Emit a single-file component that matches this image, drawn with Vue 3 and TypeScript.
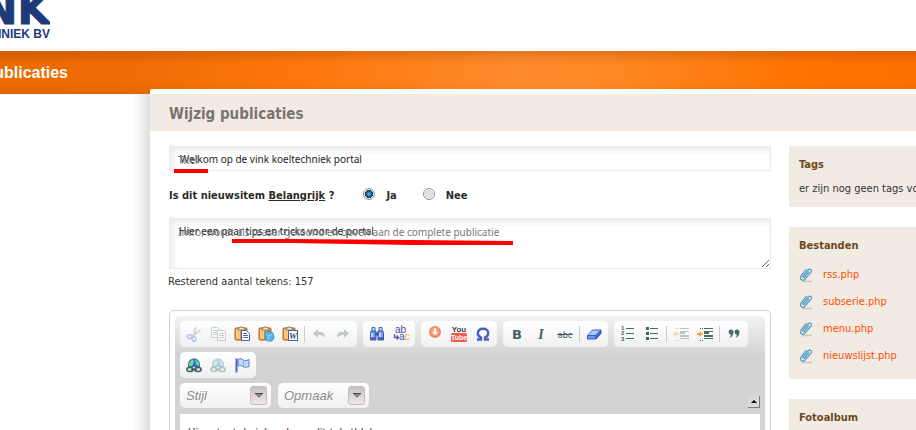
<script setup lang="ts">
import { ref } from 'vue'

interface Tool {
  label: string
  icon: string
  faded?: boolean
}
type Cell = Tool | null

const title = ref('Welkom op de vink koeltechniek portal')
const intro = ref('Hier een paar tips en tricks voor de portal')
const important = ref('ja')
const files = ['rss.php', 'subserie.php', 'menu.php', 'nieuwslijst.php']
const combos = ['Stijl', 'Opmaak']

const clipboard =
  '<rect x="1" y="2" width="12" height="12" rx="1" fill="#e9963a" stroke="#b5651d"/><rect x="2" y="3" width="4" height="10" fill="#fbc77c"/><path d="M4 4V2h2V1h3v1h2v2z" fill="#f4e6c8" stroke="#7d6a4a" stroke-width=".8"/>'
const chain =
  '<path d="M2 8C2 4 4.500 1.500 8 1.500S14 4 14 8v2H2z" fill="#2f6fd8"/><path d="M3 8c0-3 2-5 4-5.500L8 5 6 9H3zM9 3l3 1 1.500 4-1.500 1-2-2z" fill="#6be06b"/><rect x="1" y="10.500" width="6" height="4" rx="2" fill="#d9e4e2" stroke="#3f5f5f" stroke-width="1.600"/><rect x="9" y="10.500" width="6" height="4" rx="2" fill="#d9e4e2" stroke="#3f5f5f" stroke-width="1.600"/><path d="M5 12.500h6" stroke="#3f5f5f" stroke-width="1.600"/>'
const outline =
  '<path d="M3 2.500h3M3 14.500h3" stroke="#4a6a68" stroke-dasharray="1 1"/><path d="M7 2.500h9M7 12.500h9M7 5.500h9" stroke="#4a6a68"/><path d="M7 6h5v2H7zM7 9h9v2H7z" fill="#4a6a68"/>'

const icons: Record<string, string> = {
  cut: '<path d="M9.500 1L8 10M14.500 4L6 10.500" stroke="#8f9aa0" stroke-width="2"/><ellipse cx="3.500" cy="10.500" rx="2.500" ry="1.800" fill="none" stroke="#5578d8" stroke-width="1.800"/><ellipse cx="8" cy="13" rx="1.800" ry="2.200" fill="none" stroke="#5578d8" stroke-width="1.800"/>',
  copy: '<path d="M1.500 1.500h6l2 2v8h-8z" fill="#fff" stroke="#6f8584"/><path d="M3 4.500h4M3 6.500h5M3 8.500h5" stroke="#6f8584"/><path d="M7.500 4.500h6l2 2v8h-8z" fill="#fff" stroke="#6f8584"/><path d="M9 7.500h4M9 9.500h5M9 11.500h5" stroke="#6f8584"/>',
  paste: clipboard + '<path d="M7.500 4.500h5l3 3v7h-8z" fill="#fff" stroke="#4861b8"/><path d="M9 7.500h4M9 9.500h5M9 11.500h5" stroke="#5467c0"/>',
  pasteText: clipboard + '<path d="M7 7l4-2 4 2 1 5-2 3H9l-2-3z" fill="#4fb7e6" stroke="#2d84bb" stroke-width=".8"/><path d="M8 8l3 2 4-2M11 10l-1 5" stroke="#9be0f8" stroke-width=".8" fill="none"/>',
  pasteWord: clipboard + '<rect x="6.500" y="4.500" width="9" height="10" fill="#fff" stroke="#4861b8"/><text x="11" y="13" text-anchor="middle" font-family="Liberation Serif, serif" font-weight="bold" font-style="italic" font-size="9" fill="#36505a">W</text>',
  undo: '<path d="M2 7.500L7 3v3h3c3 0 4 2 3.500 6C12 9.500 10 9 7 9v3z" fill="#5d7674"/>',
  redo: '<path d="M14 7.500L9 3v3H6c-3 0-4 2-3.500 6C4 9.500 6 9 9 9v3z" fill="#5d7674"/>',
  find: '<path d="M3 1.500h3v4H3zM10 1.500h3v4h-3z" fill="#bfe1fb" stroke="#4560bd"/><path d="M2 5h5v9H1.500V8zM9 5h5l.500 3v6H9z" fill="#6f9fe8" stroke="#4454b0"/><path d="M3 7v4M11 7v4" stroke="#d7f0ff" stroke-width="1.500"/><path d="M6 6.500h4v3H6z" fill="#4454b0"/><path d="M2 12.500h5M9 12.500h5" stroke="#4454b0" stroke-width="2"/>',
  replace: '<text x="2" y="7" font-family="Liberation Sans, sans-serif" font-size="10" fill="#3f4bb0">ab</text><text x="6" y="14" font-family="Liberation Sans, sans-serif" font-size="10" fill="#3f4bb0">a<tspan fill="#f59a1c">c</tspan></text><path d="M1.500 8v3.500H5M3.500 9.500l2 2-2 2" fill="none" stroke="#5560b8" stroke-width="1.400"/>',
  download: '<circle cx="8" cy="6" r="6" fill="#f7855e"/><circle cx="8" cy="5.500" r="4.300" fill="#fb9f7c"/><path d="M7 2.500h2V6h2L8 9 5 6h2z" fill="#fff"/>',
  youtube: '<text x="8" y="6" text-anchor="middle" font-family="Liberation Sans, sans-serif" font-size="8" font-weight="bold" fill="#444">You</text><rect x="0" y="7" width="16" height="9" rx="1.500" fill="#f5594e"/><text x="8" y="14" text-anchor="middle" font-family="Liberation Sans, sans-serif" font-size="7" font-weight="bold" fill="#fff">Tube</text>',
  omega: '<path d="M2 13.500h4v-2C3.800 10.500 2.800 9 2.800 7.200 2.800 4.500 5 2.800 8 2.800s5.200 1.700 5.200 4.400c0 1.800-1 3.300-3.200 4.300v2h4" fill="none" stroke="#4560c4" stroke-width="2.400"/>',
  bold: '<text x="8" y="13" text-anchor="middle" font-family="DejaVu Sans, sans-serif" font-size="13" font-weight="bold" fill="#42625f">B</text>',
  italic: '<text x="8" y="13" text-anchor="middle" font-family="Liberation Serif, serif" font-size="14" font-weight="bold" font-style="italic" fill="#42625f">I</text>',
  strike: '<text x="8" y="12" text-anchor="middle" font-family="DejaVu Sans Condensed, sans-serif" font-size="9" fill="#42625f">abc</text><path d="M0 8.500h16" stroke="#42625f"/>',
  eraser: '<path d="M1.500 9.500L6.500 4h8.500L10 9.500z" fill="#a9c9fa" stroke="#4565cf"/><path d="M1.500 9.500H10v3.500H1.500z" fill="#6e97f2" stroke="#3d59c2"/><path d="M10 9.500L15 4v3.500L10 13z" fill="#3f64d6" stroke="#3d59c2"/>',
  numbers: '<g font-family="Liberation Sans, sans-serif" font-size="6" font-weight="bold" fill="#42625f"><text x="1" y="4">1</text><text x="1" y="9">2</text><text x="1" y="15">3</text></g><path d="M6 2.500h8M6 7.500h8M6 12.500h8" stroke="#4a6a68"/>',
  bullets: '<path d="M2 1h3v3H2zM2 6h3v3H2zM2 11h3v3H2z" fill="#42625f"/><path d="M6 2.500h8M6 7.500h8M6 12.500h8" stroke="#4a6a68"/>',
  outdent: outline + '<path d="M0 8l3.500-3v2H6v2H3.500v2z" fill="#f7a03c"/>',
  indent: outline + '<path d="M6 8L2.500 5v2H0v2h2.500v2z" fill="#f7a03c"/>',
  quote: '<path d="M2.500 6a2.500 2.500 0 1 1 5 0c0 3-1.500 5-4 6 .800-1 1.200-2 1.200-3.500A2.500 2.500 0 0 1 2.500 6zM8.500 6a2.500 2.500 0 1 1 5 0c0 3-1.500 5-4 6 .800-1 1.200-2 1.200-3.500A2.500 2.500 0 0 1 8.500 6z" fill="#4f6a6c"/>',
  link: chain,
  unlink: chain,
  anchor: '<path d="M2.500 1.500v14" stroke="#4c5fbc" stroke-width="2"/><path d="M4 2.500c2-1.500 4-1 5 .500 2 1 3 1 6-.500v7c-3 1-4.500 1-6 0-1.500-1.500-3-1.500-5-.500z" fill="#c3dafa" stroke="#5079d2"/><path d="M9.500 4v5" stroke="#8aa9e6"/>'
}

const rows: Cell[][][] = [
  [
    [
      { label: 'Knippen', icon: 'cut', faded: true },
      { label: 'Kopiëren', icon: 'copy', faded: true },
      { label: 'Plakken', icon: 'paste' },
      { label: 'Plakken als platte tekst', icon: 'pasteText' },
      { label: 'Plakken uit Word', icon: 'pasteWord' },
      null,
      { label: 'Ongedaan maken', icon: 'undo', faded: true },
      { label: 'Opnieuw uitvoeren', icon: 'redo', faded: true }
    ],
    [
      { label: 'Zoeken', icon: 'find' },
      { label: 'Vervangen', icon: 'replace' }
    ],
    [
      { label: 'Bestand invoegen', icon: 'download' },
      { label: 'YouTube', icon: 'youtube' },
      { label: 'Speciaal teken', icon: 'omega' }
    ],
    [
      { label: 'Vet', icon: 'bold' },
      { label: 'Cursief', icon: 'italic' },
      { label: 'Doorhalen', icon: 'strike' },
      null,
      { label: 'Opmaak verwijderen', icon: 'eraser' }
    ],
    [
      { label: 'Genummerde lijst', icon: 'numbers' },
      { label: 'Opsomming', icon: 'bullets' },
      null,
      { label: 'Inspringing verkleinen', icon: 'outdent', faded: true },
      { label: 'Inspringing vergroten', icon: 'indent' },
      null,
      { label: 'Citaatblok', icon: 'quote' }
    ]
  ],
  [
    [
      { label: 'Link', icon: 'link' },
      { label: 'Link verwijderen', icon: 'unlink', faded: true },
      { label: 'Interne link', icon: 'anchor' }
    ]
  ]
]
</script>

<template>
  <div class="page">
    <header class="top">
      <svg class="logo" width="220" height="51" viewBox="0 0 220 51" role="img" aria-label="Vink Koeltechniek BV">
        <text class="logo-name" x="220" y="24" text-anchor="end">VINK</text>
        <text class="logo-sub" x="220" y="38" text-anchor="end">KOELTECHNIEK BV</text>
      </svg>
    </header>
    <nav class="banner">
      <a class="crumb" href="#">Publicaties</a>
    </nav>

    <div class="shell">
      <div class="edge"></div>
      <main class="panel">
        <h1 class="heading">Wijzig publicaties</h1>
        <div class="columns">
          <form class="form" @submit.prevent>
            <div class="field">
              <input id="title" v-model="title" class="box title-box" type="text" />
              <label class="hint" for="title">Titel</label>
              <svg class="mark mark-title" width="34" height="4"><rect width="34" height="4" fill="#f00" /></svg>
            </div>

            <div class="question">
              <span class="ask">Is dit nieuwsitem <u>Belangrijk</u> ?</span>
              <label class="choice"><input v-model="important" type="radio" name="important" value="ja" />Ja</label>
              <label class="choice"><input v-model="important" type="radio" name="important" value="nee" />Nee</label>
            </div>

            <div class="field">
              <textarea id="intro" v-model="intro" class="box intro-box"></textarea>
              <label class="hint intro-hint" for="intro">Intro, wordt als teaser getoond en boven aan de complete publicatie</label>
              <svg class="mark mark-intro" width="282" height="7" viewBox="0 0 282 7">
                <path d="M0 1h60l120 1 101 1v4H180L60 5H0z" fill="#f00" />
              </svg>
            </div>
            <p class="remaining">Resterend aantal tekens: 157</p>

            <section class="editor">
              <div class="editor-inner">
                <div v-for="(row, r) in rows" :key="r" class="tools">
                  <div v-for="(group, g) in row" :key="g" class="group">
                    <template v-for="(cell, c) in group" :key="c">
                      <button v-if="cell" type="button" class="tool" :class="{ faded: cell.faded }" :aria-label="cell.label">
                        <svg width="16" height="16" viewBox="0 0 16 16" v-html="icons[cell.icon]"></svg>
                      </button>
                      <span v-else class="rule"></span>
                    </template>
                  </div>
                </div>
                <div class="tools combos">
                  <div v-for="name in combos" :key="name" class="combo">
                    <select :aria-label="name"><option>{{ name }}</option></select>
                    <span class="drop"><svg width="8" height="5" viewBox="0 0 8 5"><path d="M0 0h8v1L4 5 0 1z" fill="#8a8484" /><path d="M0 0h8v1H0z" fill="#444" /></svg></span>
                  </div>
                  <button type="button" class="collapse" aria-label="Werkbalk inklappen">
                    <svg width="6" height="3" viewBox="0 0 6 3"><path d="M3 0l3 3H0z" fill="#000" /></svg>
                  </button>
                </div>
                <div class="content"><p>Hier staat de inhoud van dit tekstblok</p></div>
              </div>
            </section>
          </form>

          <aside class="side">
            <section class="card">
              <h2>Tags</h2>
              <p class="note">er zijn nog geen tags voor dit item</p>
            </section>
            <section class="card">
              <h2>Bestanden</h2>
              <ul class="files">
                <li v-for="file in files" :key="file">
                  <svg width="14" height="16" viewBox="0 0 14 16">
                    <path d="M3 14.500h10" stroke="#cbc5c0" stroke-width="1.500" />
                    <path d="M10 4.500L5.500 10c-1 1-2.300 0-1.400-1.200L9 3c2-2 4.500 0 3 2.200l-6 7c-2.500 2.300-5.800 0-4-3L7.500 2" fill="none" stroke="#4f9cc8" stroke-width="1.200" />
                  </svg>
                  <a href="#">{{ file }}</a>
                </li>
              </ul>
            </section>
            <section class="card">
              <h2>Fotoalbum</h2>
              <p class="note">er zijn nog geen foto's</p>
            </section>
          </aside>
        </div>
      </main>
    </div>
  </div>
</template>

<style>
body {
  background: #fff;
}
</style>

<style scoped>
.page {
  height: 100vh;
  overflow: hidden;
  font-family: "DejaVu Sans Condensed", "Noto Sans", sans-serif;
  font-size: 11px;
  line-height: 16px;
  color: #333;
}
.page * {
  box-sizing: border-box;
}
.top,
.banner {
  display: flex;
  justify-content: flex-end;
}
.top {
  width: 50px;
  height: 51px;
}
.logo {
  flex: none;
}
.logo text {
  font-weight: bold;
  fill: #1d3a78;
  stroke: #1d3a78;
}
.logo-name {
  font-family: "DejaVu Sans", sans-serif;
  font-size: 42px;
  stroke-width: 1px;
}
.logo-sub {
  font-family: "Liberation Sans", sans-serif;
  font-size: 12px;
  stroke-width: 0;
}
.banner {
  height: 43px;
  align-items: center;
  padding-right: calc(100% - 68px);
  background:
    linear-gradient(rgba(110, 50, 0, 0.22), rgba(110, 50, 0, 0) 13px, rgba(110, 50, 0, 0) 30px, rgba(110, 50, 0, 0.08)),
    linear-gradient(90deg, #ec6a02 0, #ee6c02 14%, #ff770c 33%, #ff8a2b 56%, #ff8926 65%, #ff7300 88%, #fb7000);
}
.crumb {
  flex: none;
  font: bold 16px/20px "Liberation Sans", sans-serif;
  color: #fff;
  text-decoration: none;
}
.shell {
  display: grid;
  grid-template-columns: 17px minmax(0, 1fr);
  margin-top: -5px;
  padding-left: 133px;
}
.edge {
  margin-top: 5px;
  background: linear-gradient(90deg, #fff, #f1f1f1 50%, #dedede);
}
.panel {
  padding-top: 5px;
  background: #fff;
  border-top-left-radius: 2px;
}
.heading {
  margin: 0;
  padding: 10px 19px 6px;
  background: #f2ebe4;
  font-size: 15px;
  line-height: 21px;
  color: #7a746e;
}
.columns {
  display: grid;
  grid-template-columns: minmax(0, 1fr) 127px;
  gap: 18px;
  padding: 15px 0 0 19px;
}
.field {
  position: relative;
  display: flex;
}
.box {
  width: 100%;
  margin: 0;
  border: 1px solid #ebebeb;
  background: linear-gradient(#ececec, rgba(255, 255, 255, 0) 8px), linear-gradient(90deg, #efefef, #fff 8px);
  font-family: "Noto Sans", sans-serif;
  font-size: 10px;
  line-height: 14px;
  color: #222;
  outline: 0;
}
.title-box {
  height: 25px;
  padding: 0 10px;
}
.intro-box {
  height: 51px;
  padding: 5px 9px;
}
.hint {
  position: absolute;
  top: 7px;
  left: 9px;
  font-family: "Noto Sans", sans-serif;
  font-size: 10px;
  line-height: 14px;
  color: #777;
  pointer-events: none;
}
.mark {
  position: absolute;
  pointer-events: none;
}
.mark-title {
  top: 23px;
  left: 5px;
}
.mark-intro {
  top: 20px;
  left: 63px;
}
.question {
  display: flex;
  align-items: center;
  height: 47px;
  padding-top: 2px;
  font-weight: bold;
  color: #2b2b2b;
}
.ask {
  margin-right: 29px;
}
.choice {
  display: flex;
  align-items: center;
  margin-right: 26px;
}
.choice input {
  appearance: none;
  width: 12px;
  height: 12px;
  margin: 0 11px 4px 0;
  border: 1px solid #8c8f91;
  border-radius: 50%;
  background: radial-gradient(circle, #e3e3e3 40%, #cfcfcf 50%, #fff 60%);
}
.choice input:checked {
  background: radial-gradient(circle at 50% 50%, #5fc3ee 0, #14527f 3px, #12344f 4px, #f4f4f4 4px);
}
.remaining {
  margin: 5px 0 20px -1px;
}
.editor {
  padding: 5px;
  border: 1px solid #d3d3d3;
  border-radius: 5px;
}
.editor-inner {
  display: flex;
  flex-direction: column;
  gap: 5px;
  padding: 5px;
  border-radius: 5px;
  background: linear-gradient(#f3f3f3, #d3d3d3 40px);
}
.tools {
  display: flex;
  gap: 6px;
}
.group {
  display: flex;
  align-items: center;
  height: 26px;
  padding: 0 2px;
  border-radius: 5px;
  background: linear-gradient(#fff, #f0f0f0);
}
.tool {
  display: flex;
  width: 24px;
  height: 24px;
  padding: 4px;
  border: 0;
  background: none;
}
.tool svg {
  flex: none;
  overflow: visible;
}
.faded {
  opacity: 0.35;
}
.rule {
  width: 1px;
  height: 16px;
  margin: 0 2px;
  background: #ccc;
}
.combos {
  gap: 7px;
  padding-bottom: 1px;
}
.combo {
  position: relative;
  width: 91px;
  height: 25px;
  border-radius: 5px;
  background: linear-gradient(#fff, #f0f0f0);
}
.combo select {
  appearance: none;
  width: 100%;
  height: 25px;
  padding: 0 6px;
  border: 0;
  background: none;
  font: italic 13px/25px "Liberation Sans", sans-serif;
  color: #8c8c8c;
}
.drop {
  position: absolute;
  top: 3px;
  right: 4px;
  display: grid;
  place-items: center;
  width: 17px;
  height: 19px;
  border: 1px solid #c4bcbc;
  border-radius: 3px;
  background: linear-gradient(#c9c1c1, #eee9e9);
  pointer-events: none;
}
.collapse {
  display: grid;
  place-items: center;
  align-self: flex-end;
  width: 12px;
  height: 12px;
  margin-left: auto;
  padding: 0;
  border: 0 solid #7a7a7a;
  border-width: 0 1px 1px 0;
  background: #d9d9d9;
}
.content {
  min-height: 200px;
  padding: 11px 8px;
  background: #fff;
  font-size: 11px;
}
.content p {
  margin: 0;
}
.side {
  display: flex;
  flex-direction: column;
  gap: 20px;
}
.card {
  padding: 10px;
  background: #f2ebe4;
  overflow: hidden;
}
.card h2 {
  margin: 0 0 7px;
  font-size: 11px;
  line-height: 18px;
  color: #6e4a20;
}
.note {
  margin: 0;
  white-space: nowrap;
}
.files {
  display: flex;
  flex-direction: column;
  gap: 11px;
  margin: 0;
  padding: 5px 0;
  list-style: none;
}
.files li {
  display: flex;
  align-items: center;
  gap: 10px;
}
.files svg {
  flex: none;
}
.files a {
  color: #ff4e00;
  text-decoration: none;
}
</style>
